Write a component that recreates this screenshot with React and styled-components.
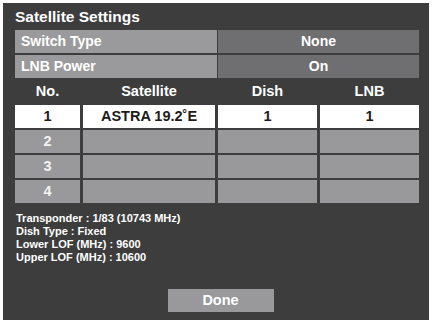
import React from 'react';
import styled, { createGlobalStyle } from 'styled-components';

const GlobalStyle = createGlobalStyle`
  html, body {
    margin: 0;
    padding: 0;
    background: #ffffff;
  }
  body {
    font-family: "Liberation Sans", Arial, sans-serif;
  }
`;

const Panel = styled.div`
  margin: 3px 3px 0 3px;
  height: 317px;
  box-sizing: border-box;
  background: #3d3d3d;
  padding: 3px 10px 0 12px;
  display: flex;
  flex-direction: column;
  font-weight: bold;
`;

const Title = styled.div`
  height: 24px;
  line-height: 22px;
  font-size: 15.5px;
  color: #ffffff;
`;

const SettingList = styled.div`
  display: flex;
  flex-direction: column;
  gap: 2px;
`;

const SettingRow = styled.div`
  display: grid;
  grid-template-columns: 202px 201px;
  gap: 1px;
  height: 23px;
`;

const Label = styled.div`
  background: #9a9a9c;
  color: #ffffff;
  font-size: 14px;
  line-height: 23px;
  padding-left: 6px;
`;

const Value = styled.div`
  background: #6f6f71;
  color: #ffffff;
  font-size: 14px;
  line-height: 23px;
  text-align: center;
`;

const Table = styled.div`
  display: grid;
  grid-template-columns: 65px 132px 99px 99px;
  column-gap: 3px;
  row-gap: 2px;
`;

const HeadCell = styled.div`
  height: 25px;
  line-height: 26px;
  text-align: center;
  color: #ffffff;
  font-size: 14.5px;
`;

const Cell = styled.div`
  height: 23px;
  line-height: 23px;
  text-align: center;
  font-size: 14.5px;
  background: ${(p) => (p.$active ? '#ffffff' : '#99999b')};
  color: ${(p) => (p.$active ? '#1c1c1c' : '#f2f2f2')};
`;

const Info = styled.div`
  margin-top: 9px;
  padding-left: 1px;
  color: #ffffff;
  font-size: 11px;
  line-height: 13px;
  flex: 1;
`;

const Footer = styled.div`
  display: flex;
  justify-content: center;
  padding: 0 0 8px 7px;
`;

const DoneButton = styled.div`
  width: 106px;
  height: 23px;
  line-height: 23px;
  background: #99999b;
  color: #ffffff;
  font-size: 14.5px;
  text-align: center;
`;

const rows = [
  { no: 1, sat: 'ASTRA 19.2˚E', dish: '1', lnb: '1', active: true },
  { no: 2, sat: '', dish: '', lnb: '' },
  { no: 3, sat: '', dish: '', lnb: '' },
  { no: 4, sat: '', dish: '', lnb: '' },
];

const info = [
  'Transponder : 1/83 (10743 MHz)',
  'Dish Type : Fixed',
  'Lower LOF (MHz) : 9600',
  'Upper LOF (MHz) : 10600',
];

export default function App() {
  return (
    <>
      <GlobalStyle />
      <Panel>
        <Title>Satellite Settings</Title>
        <SettingList>
          <SettingRow>
            <Label>Switch Type</Label>
            <Value>None</Value>
          </SettingRow>
          <SettingRow>
            <Label>LNB Power</Label>
            <Value>On</Value>
          </SettingRow>
        </SettingList>
        <Table>
          <HeadCell>No.</HeadCell>
          <HeadCell>Satellite</HeadCell>
          <HeadCell>Dish</HeadCell>
          <HeadCell>LNB</HeadCell>
          {rows.map((r) => (
            <React.Fragment key={r.no}>
              <Cell $active={r.active}>{r.no}</Cell>
              <Cell $active={r.active}>{r.sat}</Cell>
              <Cell $active={r.active}>{r.dish}</Cell>
              <Cell $active={r.active}>{r.lnb}</Cell>
            </React.Fragment>
          ))}
        </Table>
        <Info>
          {info.map((line) => (
            <div key={line}>{line}</div>
          ))}
        </Info>
        <Footer>
          <DoneButton>Done</DoneButton>
        </Footer>
      </Panel>
    </>
  );
}
